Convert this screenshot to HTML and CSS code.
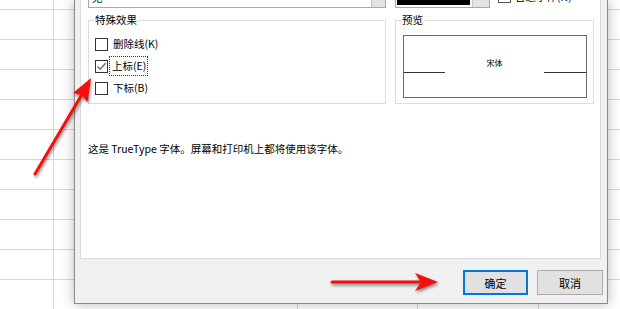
FILE: index.html
```html
<!DOCTYPE html>
<html lang="zh-CN">
<head>
<meta charset="utf-8">
<title>字体</title>
<link rel="stylesheet" href="styles.css">
</head>
<body>
<div class="dialog">
  <div class="panel">
    <div class="toprow">
      <div class="combo c1"><span class="ctext">无</span><span class="dd"></span></div>
      <div class="combo color"><span class="swatch"></span><span class="dd"></span></div>
      <div class="topcheck"><span class="cb"></span><span class="tlabel">普通字体(N)</span></div>
    </div>
    <div class="groups">
      <div class="group effects">
        <div class="legend">特殊效果</div>
        <div class="opt"><span class="cb"></span><span class="lbl">删除线(K)</span></div>
        <div class="opt"><span class="cb checked"><svg width="11" height="11" viewBox="0 0 11 11"><polyline points="1.5,5.5 4.2,8.3 9.5,2.2" fill="none" stroke="#6a6a6a" stroke-width="1.4"/></svg></span><span class="lbl focus">上标(E)</span></div>
        <div class="opt"><span class="cb"></span><span class="lbl">下标(B)</span></div>
      </div>
      <div class="group preview">
        <div class="legend">预览</div>
        <div class="pvbox">
          <div class="pvtext">宋体</div>
          <div class="seg left"></div>
          <div class="seg mid"></div>
          <div class="seg right"></div>
        </div>
      </div>
    </div>
    <p class="note">这是 TrueType 字体。屏幕和打印机上都将使用该字体。</p>
  </div>
  <div class="buttons">
    <button class="btn default">确定</button>
    <button class="btn">取消</button>
  </div>
</div>
<svg class="arrows" width="620" height="309" viewBox="0 0 620 309">
  <line x1="35" y1="174" x2="81" y2="96" stroke="#f80c0c" stroke-width="3" stroke-linecap="round"/>
  <polygon points="91,78 87.5,102 81.5,95 73,93" fill="#f80c0c"/>
  <line x1="332" y1="282" x2="422" y2="282" stroke="#f80c0c" stroke-width="3" stroke-linecap="round"/>
  <polygon points="438,282 415,273 421,282 415,291" fill="#f80c0c"/>
</svg>
</body>
</html>
```

FILE: styles.css
```css
html, body {
  margin: 0;
  padding: 0;
}
body {
  width: 620px;
  height: 309px;
  overflow: hidden;
  position: relative;
  font-family: "Noto Sans CJK SC", "Microsoft YaHei", sans-serif;
  font-size: 10.5px;
  color: #000;
  background-color: #fff;
  background-image:
    linear-gradient(to right, transparent 53px, #d6d6d6 53px, #d6d6d6 54px, transparent 54px, transparent 297px, #d6d6d6 297px, #d6d6d6 298px, transparent 298px, transparent 417px, #d6d6d6 417px, #d6d6d6 418px, transparent 418px, transparent 538px, #d6d6d6 538px, #d6d6d6 539px, transparent 539px),
    repeating-linear-gradient(to bottom, transparent 0, transparent 9px, #d6d6d6 9px, #d6d6d6 10px, transparent 10px, transparent 30px);
}
.dialog {
  margin-left: 74px;
  width: 534px;
  height: 304px;
  box-sizing: border-box;
  border: 1px solid #8a8a8a;
  border-top: none;
  background: #f0f0f0;
  box-shadow: 0 0 12px rgba(0, 0, 0, 0.28);
  padding: 0 5px 0 5px;
  display: flex;
  flex-direction: column;
}
.panel {
  width: 521px;
  height: 259px;
  box-sizing: border-box;
  background: #fff;
  border: 1px solid #dadada;
  border-top: none;
  padding-left: 7px;
}
.toprow {
  height: 8px;
  display: flex;
  align-items: flex-end;
}
.combo {
  height: 22px;
  box-sizing: border-box;
  border: 1px solid #a8a8a8;
  display: flex;
  flex: none;
}
.c1 {
  width: 298px;
  background: #fff;
}
.ctext {
  flex: 1;
  padding: 4px 0 0 3px;
  line-height: 14px;
}
.dd {
  width: 13px;
  background: #e3e3e3;
  border-left: 1px solid #c8c8c8;
}
.color {
  margin-left: 9px;
  width: 95px;
  background: #fff;
  padding: 0 0 0 1px;
}
.swatch {
  flex: 1;
  background: #000;
  margin: 0 2px 2px 0;
}
.color .dd {
  width: 16px;
}
.topcheck {
  margin-left: 8px;
  margin-bottom: 5px;
  display: flex;
  align-items: flex-end;
  gap: 4px;
  flex: none;
}
.topcheck .cb {
  border-color: #555;
}
.tlabel {
  line-height: 10px;
  margin-bottom: 1px;
}
.groups {
  display: flex;
  margin-top: 12px;
}
.group {
  height: 84px;
  box-sizing: border-box;
  border: 1px solid #dcdcdc;
  flex: none;
}
.effects {
  width: 298px;
}
.preview {
  width: 199px;
  margin-left: 9px;
}
.legend {
  display: table;
  margin: -8px 0 0 5px;
  padding: 0 1px;
  line-height: 14px;
  background: #fff;
}
.opt {
  height: 22px;
  display: flex;
  align-items: center;
  padding-left: 6px;
}
.legend + .opt {
  margin-top: 6px;
}
.cb {
  width: 13px;
  height: 13px;
  box-sizing: border-box;
  border: 1px solid #333;
  background: #fff;
  display: flex;
  align-items: center;
  justify-content: center;
  flex: none;
}
.lbl {
  margin-left: 3px;
  line-height: 14px;
  padding: 2px 1px;
  border: 1px solid transparent;
}
.lbl.focus {
  margin-left: 1px;
  padding: 2px 1px 2px 2px;
  border: 1px dotted #333;
}
.pvbox {
  margin: 8px 6px 0 7px;
  height: 63px;
  box-sizing: border-box;
  border: 1px solid #6a6a6a;
  display: grid;
  grid-template-columns: 41px 1fr 42px;
  grid-template-rows: 36px 1fr;
}
.pvtext {
  grid-column: 2;
  grid-row: 1;
  align-self: end;
  justify-self: center;
  font-size: 8px;
  line-height: 10px;
  margin-bottom: 4px;
}
.seg {
  grid-row: 2;
}
.seg.left {
  grid-column: 1;
  border-top: 1px solid #333;
}
.seg.mid {
  grid-column: 2;
}
.seg.right {
  grid-column: 3;
  border-top: 1px solid #333;
}
.note {
  margin: 38px 0 0 0;
  line-height: 14px;
}
.buttons {
  display: flex;
  justify-content: flex-end;
  gap: 9px;
  margin-top: 11px;
  margin-right: -1px;
}
.btn {
  height: 25px;
  width: 66px;
  box-sizing: border-box;
  background: #e1e1e1;
  border: 1px solid #adadad;
  font-family: "Noto Sans CJK SC", sans-serif;
  font-size: 11px;
  color: #000;
  padding: 0;
}
.btn.default {
  width: 65px;
  border: 2px solid #0078d7;
}
.arrows {
  position: absolute;
  left: 0;
  top: 0;
  pointer-events: none;
  filter: drop-shadow(1px 2px 1.5px rgba(0, 0, 0, 0.45));
}
```
